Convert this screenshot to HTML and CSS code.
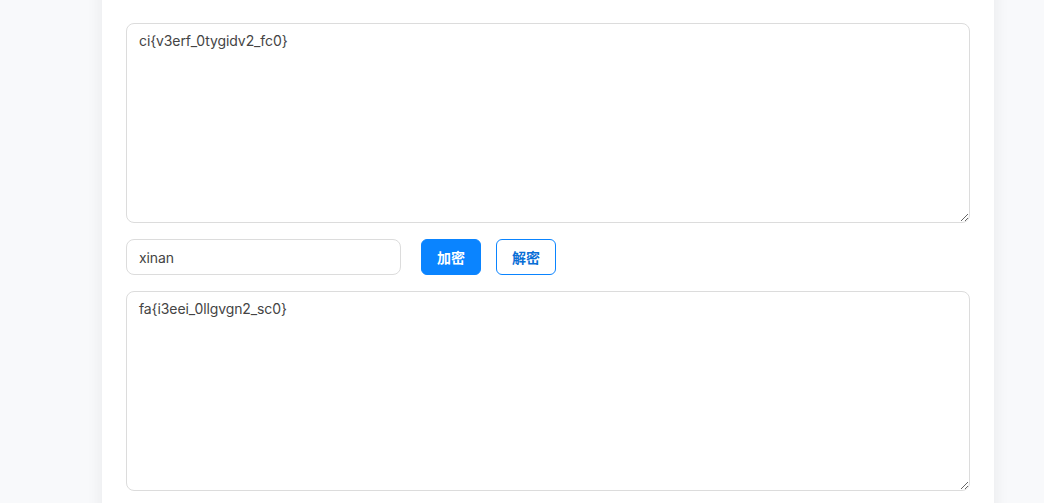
FILE: index.html
```html
<!DOCTYPE html>
<html lang="zh">
<head>
<meta charset="utf-8">
<title>维吉尼亚密码</title>
<link rel="stylesheet" href="styles.css">
</head>
<body>
<main class="card">
  <p class="hint">维吉尼亚密码 (Vigenère cipher) 加密 / 解密 (key)</p>
  <textarea class="box" spellcheck="false">ci{v3erf_0tygidv2_fc0}</textarea>
  <div class="controls">
    <input class="key" type="text" value="xinan">
    <button class="btn btn-primary" type="button">加密</button>
    <button class="btn btn-outline" type="button">解密</button>
  </div>
  <textarea class="box" spellcheck="false">fa{i3eei_0llgvgn2_sc0}</textarea>
</main>
</body>
</html>
```
FILE: styles.css
```css
html, body {
  margin: 0;
  padding: 0;
  background: #f8f9fb;
  height: 100%;
  overflow: hidden;
}
body {
  font-family: Inter, "Noto Sans CJK SC", sans-serif;
  color: #333;
}
.card {
  box-sizing: border-box;
  width: 892px;
  margin: -19px 0 0 102px;
  padding: 0 24px 40px;
  background: #fff;
  box-shadow: 0 0 16px rgba(0, 0, 0, 0.07);
  display: flex;
  flex-direction: column;
  gap: 16px;
}
.hint {
  margin: 0 0 4px 90px;
  height: 22px;
  line-height: 22px;
  font-size: 13px;
  color: #a8a4c0;
  overflow: hidden;
}
.box {
  box-sizing: border-box;
  display: block;
  width: 844px;
  height: 200px;
  border: 1px solid #dcdcdc;
  border-radius: 8px;
  padding: 7px 12px;
  font-family: Inter, sans-serif;
  font-size: 14px;
  letter-spacing: -0.1px;
  line-height: 20px;
  color: #444;
  resize: vertical;
  outline: none;
}
.controls {
  display: flex;
  align-items: center;
}
.key {
  box-sizing: border-box;
  width: 275px;
  height: 36px;
  border: 1px solid #dcdcdc;
  border-radius: 8px;
  padding: 0 12px;
  font-family: Inter, sans-serif;
  font-size: 14px;
  letter-spacing: -0.1px;
  color: #444;
  outline: none;
  margin-right: 20px;
}
.btn {
  box-sizing: border-box;
  width: 60px;
  height: 36px;
  border-radius: 6px;
  font-family: Inter, "Noto Sans CJK SC", sans-serif;
  font-size: 14px;
  font-weight: 700;
  padding: 0;
  cursor: pointer;
}
.btn-primary {
  background: #0a84ff;
  border: 1px solid #0a84ff;
  color: #fff;
  margin-right: 15px;
}
.btn-outline {
  background: #fff;
  border: 1px solid #0a84ff;
  color: #0a6fd6;
}
```
